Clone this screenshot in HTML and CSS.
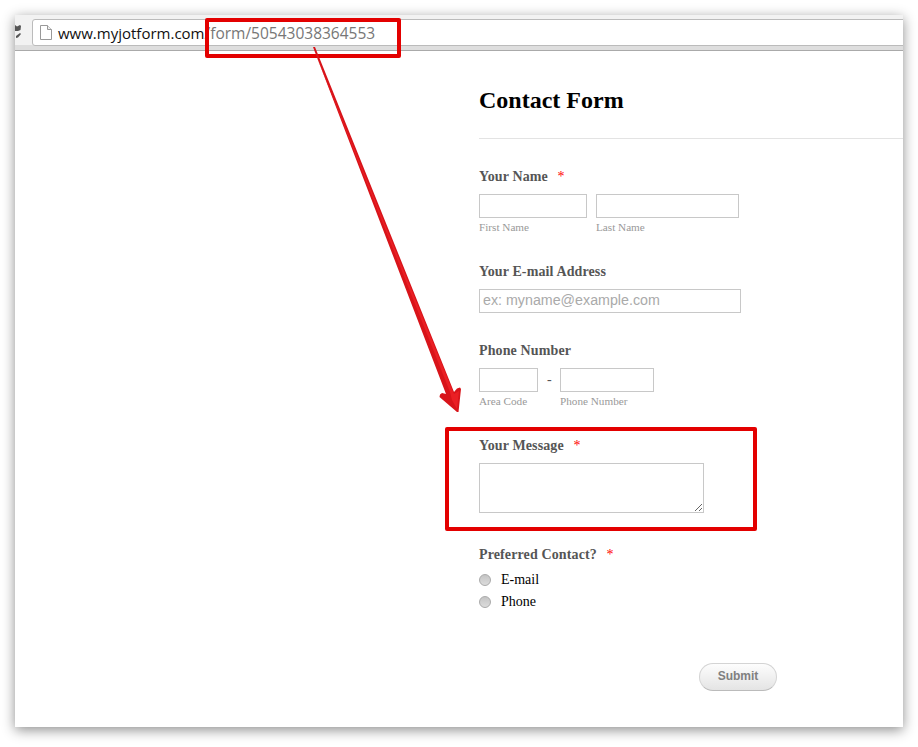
FILE: index.html
```html
<!DOCTYPE html>
<html lang="en">
<head>
    <meta charset="UTF-8">
    <meta name="viewport" content="width=device-width, initial-scale=1.0">
    <title>Contact Form</title>
    <link rel="stylesheet" href="styles.css">
</head>
<body>
    <div class="window">
        <div class="toolbar">
            <svg class="reload-icon" width="6" height="14" viewBox="0 0 6 14">
                <path d="M0 0 L2 1.5 L5 0 L6 1 L5.5 5 L3 6 L0 6 Z" fill="#555"/>
                <path d="M1 11 L5 8 L6 9 L3 12.5 L1 13 Z" fill="#555"/>
            </svg>
            <div class="address-bar">
                <svg class="page-icon" width="12" height="15" viewBox="0 0 12 15">
                    <path d="M0.5 0.5 H7.5 L11.5 4.5 V14.5 H0.5 Z" fill="#fff" stroke="#999"/>
                    <path d="M7.5 0.5 V4.5 H11.5" fill="#eee" stroke="#999"/>
                </svg>
                <span class="url-host">www.myjotform.com</span><span class="url-path">/form/50543038364553</span>
            </div>
        </div>

        <form class="form">
            <h1>Contact Form</h1>

            <div class="form-group">
                <label class="field-label">Your Name <span class="required">*</span></label>
                <div class="field-row">
                    <div class="field-cell">
                        <input type="text" class="input-first">
                        <span class="sublabel">First Name</span>
                    </div>
                    <div class="field-cell">
                        <input type="text" class="input-last">
                        <span class="sublabel">Last Name</span>
                    </div>
                </div>
            </div>

            <div class="form-group">
                <label class="field-label">Your E-mail Address</label>
                <input type="email" class="input-email" placeholder="ex: myname@example.com">
            </div>

            <div class="form-group group-phone">
                <label class="field-label">Phone Number</label>
                <div class="field-row">
                    <div class="field-cell">
                        <input type="text" class="input-area">
                        <span class="sublabel">Area Code</span>
                    </div>
                    <span class="dash">-</span>
                    <div class="field-cell">
                        <input type="text" class="input-phone">
                        <span class="sublabel">Phone Number</span>
                    </div>
                </div>
            </div>

            <div class="form-group">
                <label class="field-label">Your Message <span class="required">*</span></label>
                <textarea class="input-message"></textarea>
            </div>

            <div class="form-group group-contact">
                <label class="field-label">Preferred Contact? <span class="required">*</span></label>
                <label class="radio-row"><input type="radio" name="contact">E-mail</label>
                <label class="radio-row"><input type="radio" name="contact">Phone</label>
            </div>

            <div class="actions">
                <button type="button" class="submit-btn">Submit</button>
            </div>
        </form>
    </div>

    <!-- annotations drawn over the screenshot -->
    <div class="callout callout-url"></div>
    <div class="callout callout-message"></div>
    <svg class="arrow" width="918" height="747" viewBox="0 0 918 747">
        <path d="M313 47 L315 47 L454 392 L457 388.5 L460 387.5 L461 389 L458.5 412 L457 412 L439.5 397 L440 394.5 L442 393 L446 394 Z" fill="#d8141a"/>
        <path d="M314 50 L450 392 L452 400 L457 409 L459 391 L454 394 Z" fill="#ea1f24"/>
    </svg>
</body>
</html>
```

FILE: styles.css
```css
html, body {
    margin: 0;
    padding: 0;
    height: 747px;
    background-color: #fff;
    overflow: hidden;
}
.window {
    margin: 15px 15px 0;
    width: 888px;
    height: 712px;
    background-color: #fff;
    box-shadow: 0 3px 12px rgba(0, 0, 0, 0.45);
    overflow: hidden;
}
.toolbar {
    display: flex;
    align-items: flex-start;
    box-sizing: border-box;
    height: 36px;
    padding-top: 4px;
    background: linear-gradient(#f2f2f2 30px, #dedede 30px);
    border-bottom: 1px solid #aaa;
}
.reload-icon {
    flex: none;
    margin: 6px 11px 0 0;
}
.address-bar {
    display: flex;
    align-items: center;
    box-sizing: border-box;
    flex: none;
    width: 900px;
    height: 27px;
    padding-left: 7px;
    background-color: #fff;
    border: 1px solid #bbb;
    border-radius: 3px;
    font-family: "Open Sans", sans-serif;
    font-size: 15px;
}
.page-icon {
    margin-right: 6px;
}
.url-host {
    color: #111;
}
.url-path {
    font-size: 15.5px;
    color: #777;
}
.form {
    padding-left: 464px;
    font-family: "Liberation Serif", serif;
}
h1 {
    margin: 0 0 27px;
    padding: 35px 0 24px;
    height: 28px;
    line-height: 28px;
    font-size: 24px;
    color: #000;
    border-bottom: 1px solid #e3e3e3;
}
.form-group {
    margin-bottom: 26px;
}
.group-contact {
    margin-top: 31px;
    margin-bottom: 0;
}
.field-label {
    display: block;
    height: 20px;
    line-height: 22px;
    margin-bottom: 8px;
    font-size: 14px;
    font-weight: bold;
    letter-spacing: 0.12px;
    color: #555;
}
.required {
    margin-left: 6px;
    font-weight: normal;
    color: #f00;
}
.field-row {
    display: flex;
}
.field-cell {
    display: flex;
    flex-direction: column;
    margin-right: 9px;
}
input[type="text"],
input[type="email"],
textarea {
    display: block;
    box-sizing: border-box;
    margin: 0;
    height: 24px;
    padding: 1px 3px 3px;
    background-color: #fff;
    border: 1px solid #c8c8c8;
    border-radius: 0;
    font-family: "Liberation Sans", sans-serif;
    font-size: 14.25px;
}
input::placeholder {
    color: #aaa;
    opacity: 1;
}
.input-first {
    width: 108px;
}
.input-last {
    width: 143px;
}
.input-email {
    width: 262px;
}
.input-area {
    width: 59px;
}
.input-phone {
    width: 94px;
}
.input-message {
    width: 225px;
    height: 50px;
}
.sublabel {
    margin-top: 2px;
    padding-bottom: 1px;
    line-height: 14px;
    font-size: 11.2px;
    color: #999;
}
.group-phone {
    margin-top: 27px;
}
.dash {
    width: 4px;
    margin-right: 9px;
    line-height: 24px;
    font-size: 14px;
    color: #555;
}
.radio-row {
    display: flex;
    align-items: center;
    height: 22px;
    font-size: 14px;
    color: #000;
}
.group-contact .field-label {
    margin-bottom: 5px;
}
.radio-row input {
    appearance: none;
    box-sizing: border-box;
    width: 12px;
    height: 12px;
    margin: 0 10px 0 0;
    border: 1px solid #aaa;
    border-radius: 50%;
    background: linear-gradient(#c4c4c4, #dcdcdc);
}
.actions {
    margin-top: 50px;
    padding-left: 220px;
}
.submit-btn {
    width: 78px;
    height: 28px;
    padding: 0 0 2px;
    background: linear-gradient(#fdfdfd, #e4e4e4);
    border: 1px solid #d4d4d4;
    border-bottom-color: #bbb;
    border-radius: 14px;
    font-family: "Liberation Sans", sans-serif;
    font-size: 12px;
    font-weight: bold;
    color: #808080;
    cursor: pointer;
}
.callout {
    position: absolute;
    box-sizing: border-box;
    border: 4px solid #e30000;
    border-radius: 2px;
}
.callout-url {
    left: 205px;
    top: 18px;
    width: 196px;
    height: 40px;
}
.callout-message {
    left: 445px;
    top: 427px;
    width: 312px;
    height: 104px;
}
.arrow {
    position: absolute;
    left: 0;
    top: 0;
    pointer-events: none;
}
```
